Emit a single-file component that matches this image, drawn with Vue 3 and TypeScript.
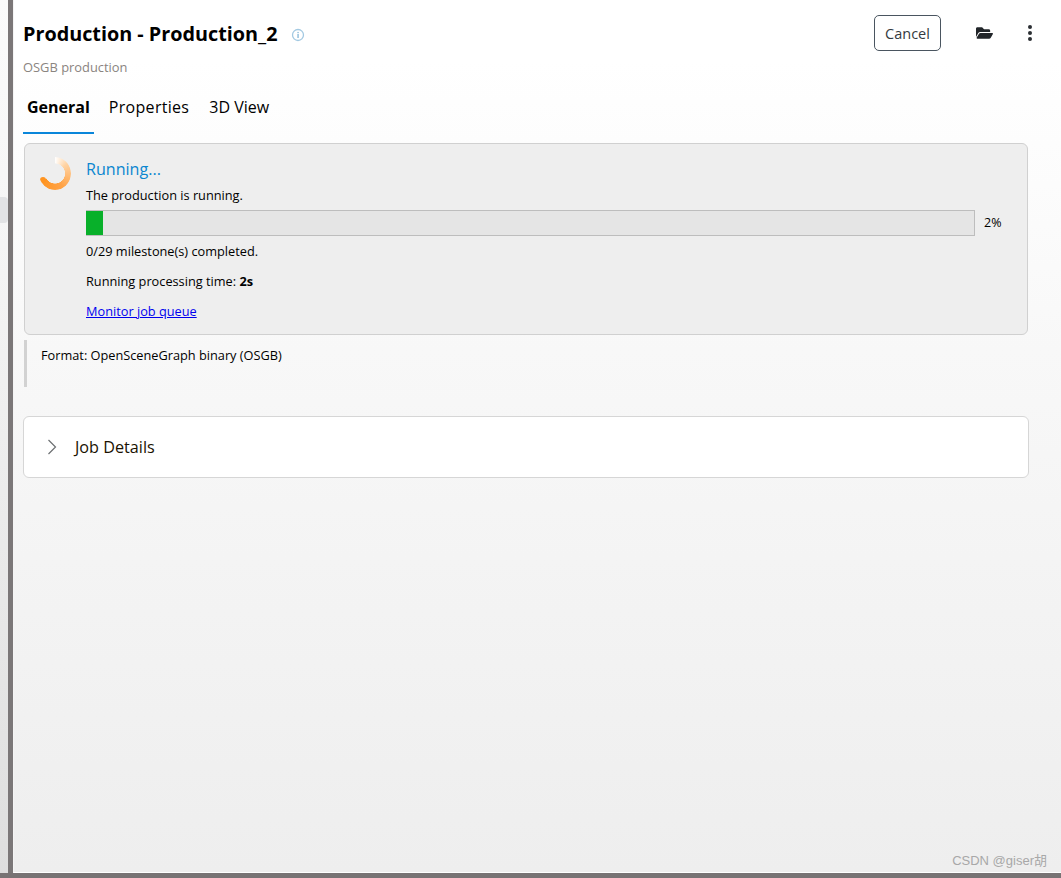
<script setup lang="ts">
const tabs: string[] = ['General', 'Properties', '3D View']
const progress = 2
const fillPx: number = progress * 8.5
</script>

<template>
  <div class="page">
    <div class="main">
      <aside class="strip"><div class="strip-tab"></div></aside>
      <div class="divider"></div>
      <section class="content">
        <header class="head">
          <div class="head-text">
            <div class="title-row">
              <h1 class="title">Production - Production_2</h1>
              <svg class="info" width="14" height="14" viewBox="0 0 14 14">
                <circle cx="7" cy="7" r="5.5" fill="none" stroke="#a3c9e2" stroke-width="1.3" />
                <rect x="6.4" y="6" width="1.3" height="4" fill="#84b6d8" />
                <rect x="6.4" y="3.9" width="1.3" height="1.3" fill="#84b6d8" />
              </svg>
            </div>
            <p class="subtitle">OSGB production</p>
          </div>
          <div class="actions">
            <button class="cancel" type="button">Cancel</button>
            <svg class="folder" width="17" height="16" viewBox="0 0 576 512">
              <path fill="#212529" d="M572.694 292.093L500.27 416.248A63.997 63.997 0 0 1 444.989 448H45.025c-18.523 0-30.064-20.093-20.731-36.093l72.424-124.155A64 64 0 0 1 152 256h399.964c18.523 0 30.064 20.093 20.73 36.093zM152 224h328v-48c0-26.51-21.49-48-48-48H272l-64-64H48C21.49 64 0 85.49 0 112v278.046l69.077-118.418C86.214 242.25 117.989 224 152 224z" />
            </svg>
            <svg class="kebab" width="6" height="18" viewBox="0 0 6 18">
              <circle cx="3" cy="3" r="2" fill="#2b2f33" />
              <circle cx="3" cy="9" r="2" fill="#2b2f33" />
              <circle cx="3" cy="15" r="2" fill="#2b2f33" />
            </svg>
          </div>
        </header>

        <nav class="tabs">
          <div v-for="(tab, i) in tabs" :key="tab" class="tab" :class="{ active: i === 0 }">{{ tab }}</div>
        </nav>

        <div class="status-card">
          <div class="spinner"><span class="cap"></span></div>
          <div class="status-body">
            <div class="status-title">Running...</div>
            <p class="line first">The production is running.</p>
            <div class="progress-row">
              <div class="bar"><div class="fill" :style="{ width: fillPx + 'px' }"></div></div>
              <span class="pct">{{ progress }}%</span>
            </div>
            <p class="line">0/29 milestone(s) completed.</p>
            <p class="line gap">Running processing time: <b>2s</b></p>
            <a class="line gap link" href="#">Monitor job queue</a>
          </div>
        </div>

        <div class="format">Format: OpenSceneGraph binary (OSGB)</div>

        <div class="details">
          <svg class="chev" width="10" height="16" viewBox="0 0 10 16">
            <path d="M1.5 1 L8.5 8 L1.5 15" fill="none" stroke="#6c6f72" stroke-width="1.2" />
          </svg>
          <span class="details-label">Job Details</span>
        </div>
      </section>
    </div>
    <div class="bottom"></div>
    <div class="watermark">CSDN @giser胡</div>
  </div>
</template>

<style>
html, body { margin: 0; background: #fff; }
</style>

<style scoped>
.page {
  position: relative;
  width: 1061px;
  height: 878px;
  display: flex;
  flex-direction: column;
  overflow: hidden;
  font-family: "Open Sans", "Noto Sans", sans-serif;
  color: #000;
}
.main { flex: 1; display: flex; min-height: 0; }
.strip {
  width: 8px;
  background: linear-gradient(#fbfbfb, #f6f6f6 25%, #dedede);
  padding-top: 197px;
  box-sizing: border-box;
}
.strip-tab { height: 26px; background: #e2e3e5; border-radius: 0 4px 4px 0; }
.divider { width: 5px; background: #7b7778; }
.content {
  flex: 1;
  box-sizing: border-box;
  padding: 15px 0 0 9px;
  background: linear-gradient(#ffffff 0, #ffffff 60px, #f8f8f8 350px, #eeeeee 100%);
  border-bottom: 1px solid #fff;
  border-left: 1px solid #f4f4f4;
}
.head { display: flex; justify-content: space-between; align-items: flex-start; height: 68px; }
.head-text { padding-top: 3px; }
.title-row { display: flex; align-items: center; height: 32px; }
.title { margin: 0; font-size: 19.8px; font-weight: 700; line-height: 32px; }
.info { margin: 2px 0 0 13px; }
.subtitle { margin: 8px 0 0; font-size: 12.9px; line-height: 18px; color: #8a8480; }
.actions { display: flex; align-items: center; margin-right: 28px; height: 36px; }
.cancel {
  width: 67px;
  height: 36px;
  box-sizing: border-box;
  background: transparent;
  border: 1px solid #4a5560;
  border-radius: 5px;
  font: 14.5px "Open Sans", sans-serif;
  color: #343a40;
  padding: 0;
}
.folder { margin-left: 35px; }
.kebab { margin-left: 34px; }
.tabs { display: flex; height: 51px; }
.tab {
  box-sizing: border-box;
  height: 51px;
  padding: 12px 4px 0;
  margin-right: 12px;
  font-size: 16px;
  line-height: 24px;
}
.tab:nth-child(2) { letter-spacing: 0.3px; }
.tab.active { font-weight: 700; border-bottom: 2px solid #0a86da; margin-right: 11px; }
.status-card {
  margin: 9px 0 0 1px;
  width: 1004px;
  height: 192px;
  box-sizing: border-box;
  background: #eeeeee;
  border: 1px solid #d0d0d0;
  border-radius: 6px;
  display: flex;
  padding: 13px 0 0 14px;
}
.spinner {
  position: relative;
  width: 32px;
  height: 33px;
  flex: none;
  border-radius: 50%;
  background: conic-gradient(from 0deg, #ffffff 0deg, #ffd3a3 50deg, #ffa347 150deg, #ff9420 240deg, transparent 240deg);
  -webkit-mask: radial-gradient(circle, transparent 9.8px, #000 10.3px);
  mask: radial-gradient(circle, transparent 9.8px, #000 10.3px);
}
.cap {
  position: absolute;
  left: 1.4px;
  top: 20px;
  width: 6px;
  height: 6px;
  border-radius: 50%;
  background: #ff9420;
}
.status-body { margin-left: 15px; width: 926px; }
.status-title { font-size: 16.1px; line-height: 24px; color: #0a86d0; }
.line { display: block; margin: 0; font-size: 12.75px; line-height: 18px; }
.first { margin-top: 5px; }
.gap { margin-top: 12px; }
.progress-row { display: flex; align-items: center; margin-top: 6px; margin-bottom: 6px; }
.bar {
  width: 889px;
  height: 26px;
  box-sizing: border-box;
  border: 1px solid #bdbdbd;
  border-left: none;
  background: #e5e5e5;
}
.fill { height: 100%; background: #08b02a; }
.pct { margin-left: 9px; font-size: 12.5px; line-height: 18px; }
.link { color: #0000ee; text-decoration: underline; }
.format {
  margin: 5px 0 0 1px;
  height: 47px;
  box-sizing: border-box;
  border-left: 3px solid #d2d2d2;
  padding: 5px 0 0 14px;
  font-size: 12.75px;
  line-height: 20px;
}
.details {
  margin-top: 29px;
  width: 1006px;
  height: 62px;
  box-sizing: border-box;
  background: #fff;
  border: 1px solid #d6d6d6;
  border-radius: 6px;
  display: flex;
  align-items: center;
  padding-left: 23px;
}
.details-label { margin-left: 18px; font-size: 16.2px; color: #1a1200; }
.bottom { height: 5px; background: #787374; }
.watermark {
  position: absolute;
  right: 14px;
  bottom: 9px;
  font: 13px "Liberation Sans", "Noto Sans CJK SC", sans-serif;
  color: #a8a8a8;
}
</style>
